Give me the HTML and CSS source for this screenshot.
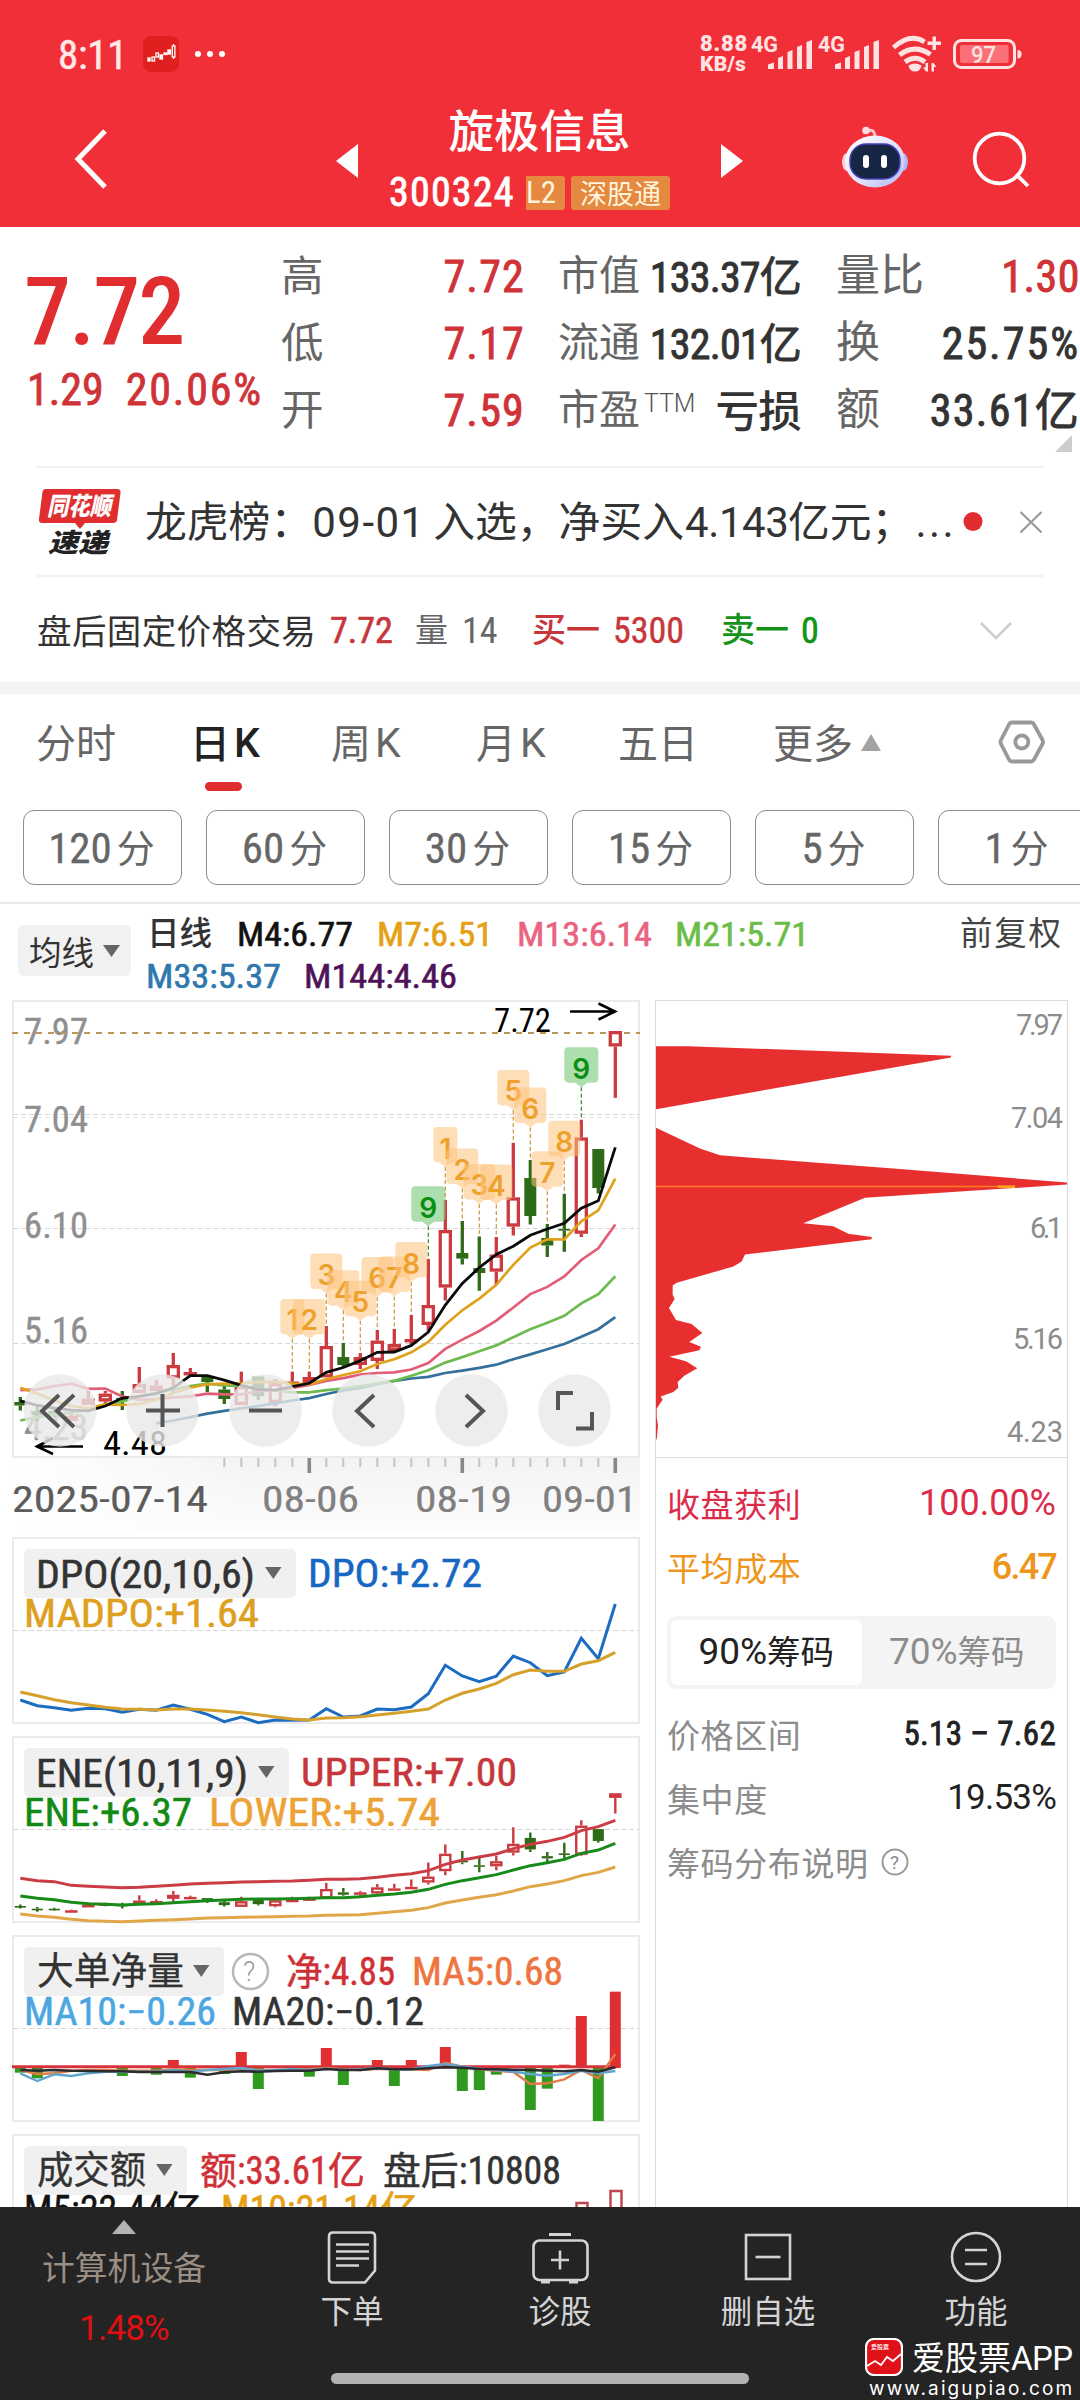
FILE: index.html
```html
<!DOCTYPE html>
<html lang="zh-CN">
<head>
<meta charset="utf-8">
<title>旋极信息 300324</title>
<link rel="stylesheet" href="styles.css">
</head>
<body>
<div class="screen">

<header class="top">
  <div class="status">
    <span class="clock">8:11</span>
    <svg class="app-mini" width="36" height="36" viewBox="0 0 36 36"><rect width="36" height="36" rx="8" fill="#e0201f"/><g stroke="#fff" stroke-width="1.3" fill="none"><rect x="5" y="22" width="2" height="3" fill="#fff"/><rect x="9" y="21" width="2.500" height="4"/><rect x="13" y="17" width="2.500" height="4"/><rect x="17" y="19" width="2.500" height="4" fill="#fff"/><rect x="21" y="17" width="3" height="1.500"/><rect x="25" y="14" width="2.500" height="4" fill="#fff"/><path d="M30.500 8v15"/><rect x="29.300" y="10" width="2.600" height="11" fill="#e0201f"/></g></svg>
    <svg class="dots" width="32" height="8" viewBox="0 0 32 8" fill="#fff"><circle cx="4" cy="4" r="3"/><circle cx="16" cy="4" r="3"/><circle cx="28" cy="4" r="3"/></svg>
    <span class="speed"><b>8.88</b><b>KB/s</b></span>
    <svg class="signals" width="330" height="40" viewBox="750 34 330 40" fill="#ffe3e3">
      <text class="net" x="751" y="52" textLength="27" lengthAdjust="spacingAndGlyphs">4G</text>
      <path d="M768 69v-4.500l6-2v6.500zM778 69v-11l5-2v13zM787.500 69v-17l5-2v19zM797 69v-22l5-2v24zM806.500 69v-27l5.500-2v29z"/>
      <text class="net" x="818" y="52" textLength="27" lengthAdjust="spacingAndGlyphs">4G</text>
      <path d="M835 69v-4.500l6-2v6.500zM845 69v-11l5-2v13zM854.500 69v-17l5-2v19zM864 69v-22l5-2v24zM873.500 69v-27l5.500-2v29z"/>
      <g fill="none" stroke="#ffe3e3" stroke-width="5"><path d="M893.500 47.500q17-15 31-5.500"/><path d="M899.500 55q15-11.500 31-.5"/><path d="M905 62q10-7.500 20 0"/></g>
      <path d="M908.500 65.500q6.500-4 13 0q-1 6-6.500 6t-6.500-6z"/>
      <path d="M932.500 36.500h3.500v5h5v3.500h-5v5h-3.500v-5h-5v-3.500h5zM928 63v8.500h-2l-3-4h2.500V63zM931.500 71.500V63h2l3 4h-2.500v4.500z"/>
      <rect x="954.500" y="40.500" width="60" height="27" rx="7" fill="none" stroke="#ffe3e3" stroke-width="3"/>
      <rect x="960" y="45" width="48.500" height="18" rx="2" fill="#fb7076"/>
      <path d="M1017.500 50q4 0 4 4.200t-4 4.200z"/>
      <text class="batt" x="971" y="62.500" textLength="25" lengthAdjust="spacingAndGlyphs">97</text>
    </svg>
  </div>
  <div class="titlebar">
    <svg width="120" height="136" viewBox="0 91 120 136"><path d="M105 131L78 159l27 28" fill="none" stroke="#fff" stroke-width="5"/></svg>
    <svg class="prev" width="22" height="34" viewBox="0 0 22 34"><path d="M22 0v34L0 17z" fill="#fff"/></svg>
    <div class="stock">
      <div class="stock-name">旋极信息</div>
      <div class="stock-code"><span>300324</span><i class="tag tag-l2">L2</i><i class="tag">深股通</i></div>
    </div>
    <svg class="next" width="22" height="34" viewBox="0 0 22 34"><path d="M0 0v34l22-17z" fill="#fff"/></svg>
    <svg class="robot" width="70" height="64" viewBox="840 125 70 64">
      <defs><linearGradient id="shell" x1="0" y1="0" x2="1" y2="1"><stop offset="0" stop-color="#fff"/><stop offset=".6" stop-color="#dfe0fb"/><stop offset="1" stop-color="#a9b3f3"/></linearGradient></defs>
      <path d="M867 131q7-3 8 5" fill="none" stroke="#ffc4cf" stroke-width="3"/><circle cx="866" cy="130.500" r="3.800" fill="#ffdbe2"/>
      <ellipse cx="847" cy="162" rx="5" ry="9" fill="#ffd0dc"/><ellipse cx="903" cy="162" rx="5" ry="9" fill="#aeb4f5"/>
      <ellipse cx="875" cy="161.500" rx="30" ry="26" fill="url(#shell)"/>
      <rect x="850" y="144" width="50" height="35" rx="16" fill="#162644" stroke="#4b3fb8" stroke-width="1.500"/>
      <rect x="863" y="155" width="6" height="13" rx="3" fill="#fff"/><rect x="881" y="155" width="6" height="13" rx="3" fill="#fff"/>
    </svg>
    <svg class="search" width="60" height="60" viewBox="970 129 60 60" fill="none" stroke="#fff" stroke-width="3.800"><circle cx="999.500" cy="158.500" r="24.800"/><path d="M1016 174l12 12"/></svg>
  </div>
</header>

<section class="quote">
  <div class="price">
    <div class="last">7.72</div>
    <div class="change"><span>1.29</span><span class="pct">20.06%</span></div>
  </div>
  <dl class="facts f1">
    <div><dt>高</dt><dd class="up">7.72</dd></div>
    <div><dt>低</dt><dd class="up">7.17</dd></div>
    <div><dt>开</dt><dd class="up">7.59</dd></div>
  </dl>
  <dl class="facts f2">
    <div><dt>市值</dt><dd>133.37亿</dd></div>
    <div><dt>流通</dt><dd>132.01亿</dd></div>
    <div><dt>市盈<sup>TTM</sup></dt><dd class="cjk">亏损</dd></div>
  </dl>
  <dl class="facts f3">
    <div><dt>量比</dt><dd class="up">1.30</dd></div>
    <div><dt>换</dt><dd class="wide">25.75%</dd></div>
    <div><dt>额</dt><dd>33.61亿</dd></div>
  </dl>
  <svg class="corner" width="17" height="17" viewBox="0 0 17 17"><path d="M17 0v17H0z" fill="#ccc"/></svg>
</section>

<section class="news">
  <svg width="84" height="68" viewBox="36 487 84 68">
    <path d="M45 488h71q4 0 3.500 4l-3.500 27q-.6 3-4 3H84l-5 6-5-6H41q-3.500 0-3-4l3.500-27q.5-3 3.500-3z" fill="#e02e30"/>
    <text class="logo-top" x="46" y="514" textLength="64" lengthAdjust="spacingAndGlyphs">同花顺</text>
    <text class="logo-bottom" x="47" y="551" textLength="60" lengthAdjust="spacingAndGlyphs">速递</text>
  </svg>
  <span class="headline">龙虎榜：<em>09-01</em>入选，净买入<em class="n2">4.143</em>亿元；<em class="n3">...</em></span>
  <svg class="news-end" width="83" height="30" viewBox="960 505 83 30"><circle cx="973" cy="520.500" r="9.500" fill="#e02e30"/><path d="M1020.500 511l21 20.500M1041.500 511l-21 20.500" stroke="#999" stroke-width="2.200"/></svg>
</section>

<section class="after">
  <span class="a1">盘后固定价格交易</span><span class="a2">7.72</span><span class="a3">量</span><span class="a4">14</span><span class="a5">买一</span><span class="a6">5300</span><span class="a7">卖一</span><span class="a8">0</span>
  <svg width="34" height="20" viewBox="0 0 34 20"><path d="M2 2l15 15L32 2" fill="none" stroke="#ccc" stroke-width="2.500"/></svg>
</section>

<nav class="tabs">
  <span>分时</span><span class="on">日<em>K</em></span><span>周<em>K</em></span><span>月<em>K</em></span><span>五日</span><span>更多<svg class="tri" width="20" height="17" viewBox="0 0 20 17"><path d="M10 0l10 17H0z" fill="#a3a3a3"/></svg></span>
  <svg class="hex" width="48" height="46" viewBox="0 0 48 46" fill="none" stroke="#999" stroke-width="3.800" stroke-linejoin="round"><path d="M14 3.500h19q2 0 3 2L44.500 21q1 2 0 4L36 40.500q-1 2-3 2H14q-2 0-3-2L3 25q-1-2 0-4L11 5.500q1-2 3-2z"/><circle cx="23.800" cy="23" r="6.500"/></svg>
</nav>
<div class="periods"><span><em>120</em>分</span><span><em>60</em>分</span><span><em>30</em>分</span><span><em>15</em>分</span><span><em>5</em>分</span><span><em>1</em>分</span></div>

<section class="ma">
  <span class="ma-pick">均线<svg width="17" height="12" viewBox="0 0 17 12"><path d="M0 0h17l-8.500 12z" fill="#666"/></svg></span>
  <svg class="ma-list" width="930" height="85" viewBox="148 910 930 85">
    <text x="147" y="944" class="c" fill="#333" textLength="65">日线</text>
    <text x="237" y="945" class="d" color="#111" textLength="116" lengthAdjust="spacingAndGlyphs">M4:6.77</text>
    <text x="377" y="945" class="d" color="#e5a014" textLength="116" lengthAdjust="spacingAndGlyphs">M7:6.51</text>
    <text x="517" y="945" class="d" color="#ea6480" textLength="135" lengthAdjust="spacingAndGlyphs">M13:6.14</text>
    <text x="675" y="945" class="d" color="#6bbd47" textLength="134" lengthAdjust="spacingAndGlyphs">M21:5.71</text>
    <text x="146" y="987" class="d" color="#2f78ae" textLength="135" lengthAdjust="spacingAndGlyphs">M33:5.37</text>
    <text x="304" y="987" class="d" color="#4e1259" textLength="153" lengthAdjust="spacingAndGlyphs">M144:4.46</text>
    <text x="960" y="944" class="c r" fill="#444" textLength="101">前复权</text>
  </svg>
</section>

<main class="board">
  <div class="left">
    <svg id="kline" class="kline" width="628" height="532" viewBox="12 1000 628 532">
      <defs><linearGradient id="fade" x1="0" y1="0" x2="0" y2="1"><stop offset="0" stop-color="#f3f3f3"/><stop offset="1" stop-color="#fcfcfc"/></linearGradient>
      <linearGradient id="side" x1="0" y1="0" x2="1" y2="0"><stop offset="0" stop-color="#fff"/><stop offset=".4" stop-color="#fff" stop-opacity="0"/></linearGradient></defs>
      <rect x="12" y="1458" width="628" height="74" fill="url(#fade)"/><rect x="12" y="1458" width="628" height="74" fill="url(#side)"/>
      <rect x="13" y="1001" width="626" height="456" fill="#fff" stroke="#ebebeb" stroke-width="2"/>
      <g stroke="#d6d6d6" stroke-dasharray="5 3"><path d="M13 1114.500H639"/><path d="M13 1117.500H639" opacity=".6"/><path d="M13 1228.500H639"/><path d="M13 1343.500H639"/></g>
      <g class="y-axis">
        <text x="24" y="1044" textLength="64">7.97</text><text x="24" y="1132" textLength="64">7.04</text><text x="24" y="1238" textLength="64">6.10</text><text x="24" y="1343" textLength="64">5.16</text><text x="24" y="1440" textLength="64">4.23</text>
      </g>
      <path d="M12 1033H640" stroke="#bd9757" stroke-width="1.800" stroke-dasharray="6 6"/>
      <g id="candles"></g>
      <g id="averages"></g>
      <g id="marks"></g>
      <g class="extreme"><text x="494" y="1032" textLength="57" lengthAdjust="spacingAndGlyphs">7.72</text><text x="103" y="1455" textLength="64" lengthAdjust="spacingAndGlyphs">4.48</text></g>
      <g fill="none" stroke="#000" stroke-width="2.600"><path d="M570 1011.500h44M598.500 1003.500l16.500 8-16.500 8"/><path d="M83 1446.500H39M53 1438l-16 8.500 16 7.500"/></g>
      <g fill="#e9e9e9" fill-opacity=".8"><circle cx="60" cy="1410.500" r="36.300"/><circle cx="162.500" cy="1410.500" r="36.300"/><circle cx="265.500" cy="1410.500" r="36.300"/><circle cx="368.500" cy="1410.500" r="36.300"/><circle cx="471.500" cy="1410.500" r="36.300"/><circle cx="574.500" cy="1410.500" r="36.300"/></g>
      <g fill="none" stroke="#555" stroke-width="4"><path d="M59 1395l-17 16 17 16M74 1395l-17 16 17 16"/><path d="M146 1410.500h34M162.500 1394v33"/><path d="M249 1410.500h33"/><path d="M374 1395l-17 16 17 16"/><path d="M466 1395l17 16-17 16"/><path d="M573 1393h-15v17M576 1428.500h16v-16.500"/></g>
      <g id="ticks"></g>
      <g class="x-axis"><text x="12" y="1512" textLength="196" class="dk" lengthAdjust="spacingAndGlyphs">2025-07-14</text><text x="262" y="1512" textLength="97" lengthAdjust="spacingAndGlyphs">08-06</text><text x="415" y="1512" textLength="97" lengthAdjust="spacingAndGlyphs">08-19</text><text x="542" y="1512" textLength="95" lengthAdjust="spacingAndGlyphs">09-01</text></g>
    </svg>

    <svg class="sub" width="628" height="188" viewBox="12 1537 628 188">
      <rect x="13" y="1538" width="626" height="185" fill="#fff" stroke="#ebebeb" stroke-width="2"/>
      <path d="M13 1630.500H639" stroke="#d6d6d6" stroke-dasharray="5 3"/>
      <rect x="24" y="1549" width="272" height="49" rx="5" fill="#f0f0f0"/><path d="M265 1567h16.500l-8.200 12z" fill="#666"/>
      <g class="lg"><text x="36" y="1588" textLength="219" color="#333" lengthAdjust="spacingAndGlyphs">DPO(20,10,6)</text><text x="308" y="1587" textLength="174" color="#1667c4" lengthAdjust="spacingAndGlyphs">DPO:+2.72</text><text x="24" y="1627" textLength="235" color="#dea01f" lengthAdjust="spacingAndGlyphs">MADPO:+1.64</text></g>
      <g id="dpo"></g>
    </svg>

    <svg class="sub" width="628" height="188" viewBox="12 1736 628 188">
      <rect x="13" y="1737" width="626" height="185" fill="#fff" stroke="#ebebeb" stroke-width="2"/>
      <path d="M13 1829.500H639" stroke="#d6d6d6" stroke-dasharray="5 3"/>
      <rect x="24" y="1748" width="265" height="49" rx="5" fill="#f0f0f0"/><path d="M258 1766h16.500l-8.200 12z" fill="#666"/>
      <g class="lg"><text x="36" y="1787" textLength="212" color="#333" lengthAdjust="spacingAndGlyphs">ENE(10,11,9)</text><text x="301" y="1786" textLength="216" color="#c7363b" lengthAdjust="spacingAndGlyphs">UPPER:+7.00</text><text x="24" y="1826" textLength="168" color="#128a14" lengthAdjust="spacingAndGlyphs">ENE:+6.37</text><text x="209" y="1826" textLength="231" color="#eda236" lengthAdjust="spacingAndGlyphs">LOWER:+5.74</text></g>
      <g id="ene"></g>
    </svg>

    <svg class="sub" width="628" height="188" viewBox="12 1935 628 188">
      <rect x="13" y="1936" width="626" height="185" fill="#fff" stroke="#ebebeb" stroke-width="2"/>
      <path d="M13 2028.500H639" stroke="#d6d6d6" stroke-dasharray="5 3"/>
      <rect x="24" y="1947" width="200" height="49" rx="5" fill="#f0f0f0"/><path d="M193 1965h16.500l-8.200 12z" fill="#666"/>
      <circle cx="250.500" cy="1971.500" r="17.500" fill="none" stroke="#b8b8b8" stroke-width="2.500"/><text x="243" y="1981" class="q">?</text>
      <g class="lg"><text x="37" y="1984" textLength="147" color="#333" class="c" lengthAdjust="spacingAndGlyphs">大单净量</text><text x="286" y="1985" textLength="109" color="#cf3036" lengthAdjust="spacingAndGlyphs">净:4.85</text><text x="412" y="1985" textLength="151" color="#ee7440" lengthAdjust="spacingAndGlyphs">MA5:0.68</text><text x="24" y="2025" textLength="192" color="#4ba6e2" lengthAdjust="spacingAndGlyphs">MA10:−0.26</text><text x="232" y="2025" textLength="192" color="#333" lengthAdjust="spacingAndGlyphs">MA20:−0.12</text></g>
      <g id="net"></g>
    </svg>

    <svg class="sub last-sub" width="628" height="73" viewBox="12 2134 628 73">
      <rect x="13" y="2135" width="626" height="185" fill="#fff" stroke="#ebebeb" stroke-width="2"/>
      <rect x="24" y="2146" width="163" height="49" rx="5" fill="#f0f0f0"/><path d="M156 2164h16.500l-8.200 12z" fill="#666"/>
      <g class="lg"><text x="37" y="2183" textLength="109" color="#333" class="c" lengthAdjust="spacingAndGlyphs">成交额</text><text x="200" y="2184" textLength="165" color="#cf3036" lengthAdjust="spacingAndGlyphs">额:33.61亿</text><text x="383" y="2184" textLength="178" color="#333" lengthAdjust="spacingAndGlyphs">盘后:10808</text><text x="24" y="2223" textLength="178" color="#111" lengthAdjust="spacingAndGlyphs">M5:22.44亿</text><text x="221" y="2223" textLength="197" color="#e5a014" lengthAdjust="spacingAndGlyphs">M10:21.14亿</text></g>
      <g fill="none" stroke="#c2474c" stroke-width="2.500"><path d="M576.500 2210v-7h11v7M610.500 2210v-19h11v19"/></g>
    </svg>
  </div>

  <aside class="chips">
    <svg width="411" height="456" viewBox="656 1001 411 456">
      <g transform="translate(640 990) scale(.3333 .3444)" fill="#e82f30"><path d="M48 163H145L933 191V196L48 346z"/><path d="M48 400L180 460 240 480 780 520 1282 559V565L1075 578 675 603 490 677 580 686 625 708 695 717V724L315 768 305 788 280 803 110 850 98 858V885L104 897 87 923 108 958 155 970 187 996 148 1022 183 1036 178 1046 88 1065 138 1078 172 1098 133 1120 113 1138 115 1155 100 1167 62 1180 68 1190 50 1215V1240L54 1265 50 1305H48z"/></g>
      <path d="M656 1186.500H1015" stroke="#ff7b22" stroke-width="1.500"/><path d="M998 1186.700h17" stroke="#ffa81e" stroke-width="2.500"/>
      <g class="chip-axis"><text x="1016" y="1035" textLength="47">7.97</text><text x="1011" y="1127.500" textLength="52">7.04</text><text x="1030" y="1238" textLength="33">6.1</text><text x="1013" y="1349" textLength="50">5.16</text><text x="1007" y="1441.500" textLength="56">4.23</text></g>
    </svg>
    <div class="stats">
      <div class="row win"><span>收盘获利</span><b>100.00%</b></div>
      <div class="row cost"><span>平均成本</span><b class="m">6.47</b></div>
      <div class="seg"><span class="on"><em>90%</em>筹码</span><span><em>70%</em>筹码</span></div>
      <div class="row"><span>价格区间</span><b class="range">5.13 – 7.62</b></div>
      <div class="row"><span>集中度</span><b class="conc">19.53%</b></div>
      <div class="row help"><span>筹码分布说明</span><svg width="28" height="28" viewBox="0 0 28 28"><circle cx="14" cy="14" r="12.500" fill="none" stroke="#999" stroke-width="2"/><text x="9" y="21" class="q2">?</text></svg></div>
    </div>
  </aside>
</main>

<footer class="bar">
  <div class="sector"><svg width="24" height="14" viewBox="0 0 24 14"><path d="M12 0l12 14H0z" fill="#b3b3b3"/></svg><span>计算机设备</span><b>1.48%</b></div>
  <div class="item"><svg width="60" height="56" viewBox="322 2229 60 56" fill="none" stroke="#d4d4d4" stroke-width="2.600"><path d="M333 2232.500h38q4 0 4 4v34l-10 12h-32q-4 0-4-4v-42q0-4 4-4z"/><path d="M336 2244.500h33M336 2251.500h33M336 2258.500h33M336 2265.500h23"/></svg><span>下单</span></div>
  <div class="item"><svg width="60" height="56" viewBox="530 2229 60 56" fill="none" stroke="#d4d4d4" stroke-width="2.600"><path d="M549 2234.500h22" stroke-width="3"/><rect x="533.500" y="2240.500" width="54" height="39.500" rx="6"/><path d="M551 2260h18M560 2250.500v19"/><path d="M541 2281.500h9M569 2281.500h9" stroke-width="4"/></svg><span>诊股</span></div>
  <div class="item"><svg width="60" height="56" viewBox="738 2229 60 56" fill="none" stroke="#d4d4d4" stroke-width="2.600"><rect x="746" y="2235" width="44" height="44"/><path d="M755.500 2257h25"/></svg><span>删自选</span></div>
  <div class="item"><svg width="60" height="56" viewBox="946 2229 60 56" fill="none" stroke="#d4d4d4" stroke-width="2.600"><circle cx="976" cy="2257" r="24"/><path d="M965 2250h22M965 2264h22"/></svg><span>功能</span></div>
  <i class="home"></i>
  <div class="mark">
    <svg width="38" height="38" viewBox="0 0 38 38"><rect x="1" y="1" width="36" height="36" rx="8" fill="#e01219" stroke="#fff" stroke-width="2.200"/><text x="6" y="10.500" class="tiny">爱股票</text><path d="M2 28l8-5 6 4 6-8 6 4 8-7" fill="none" stroke="#fff" stroke-width="1.800"/></svg>
    <span>爱股票<em>APP</em></span><small>www.aigupiao.com</small>
  </div>
</footer>
</div>
<script src="chart.js"></script>
</body>
</html>
```
FILE: styles.css
```css
*{box-sizing:border-box;margin:0;padding:0}
body{background:#fff;font-family:"Roboto Condensed",Roboto,"Noto Sans CJK SC",sans-serif;color:#333}
em,i{font-style:normal}
svg{display:block;flex:none}
.screen{width:1080px;height:2400px;overflow:hidden;display:flex;flex-direction:column;position:relative}

.top{height:227px;background:#f12f38;color:#fff;flex:none}
.status{height:91px;padding:34px 0 0 58px;display:flex;align-items:flex-start}
.clock{font-size:41px;line-height:42px;width:85px;letter-spacing:-.3px;color:#ffe8e8;-webkit-text-stroke:.5px}
.app-mini{margin-top:2px}
.dots{margin:16px 0 0 15px}
.speed{width:54px;margin-left:474px;display:flex;flex-direction:column;font:700 22px/20px Roboto,sans-serif;color:#ffe3e3;white-space:nowrap}
.speed b{letter-spacing:.8px}
.speed b+b{font-size:21px;letter-spacing:.2px;line-height:20px}
.signals{margin-left:-4px;overflow:visible}
.net{font:700 22px Roboto,sans-serif}
.batt{font:500 23px Roboto,sans-serif;fill:#ffe3e3}
.titlebar{height:136px;display:grid;grid-template-columns:336px 22px 363px 22px 97px 70px 60px 60px}
.titlebar>svg{align-self:start}
.titlebar .prev,.titlebar .next{margin-top:53px}
.stock{padding-top:9px;text-align:center}
.stock-name{font:500 45.500px/56px "Noto Sans CJK SC",sans-serif;height:63px}
.stock-code{display:flex;height:52px;align-items:center;padding-left:31px;font-size:40px}
.stock-code span{width:137px;letter-spacing:1.200px;line-height:46px;text-align:left;font-weight:400;-webkit-text-stroke:.8px;padding-top:7px}
.tag{background:#e4893f;color:#fff3dc;font:400 27px/34px "Noto Sans CJK SC",sans-serif;height:34px;width:99px;border-radius:3px;text-align:center;margin-top:7px}
.tag-l2{width:39px;margin-right:6px;font-family:"Roboto Condensed",sans-serif;font-size:31px;text-align:left;border-radius:0 3px 3px 0}
.robot{grid-column:6;margin-top:34px}
.search{grid-column:8;margin-top:38px}

.quote{height:239px;display:flex;padding-top:15px;position:relative;flex:none}
.price{width:281px;padding-left:24px;color:#e02e30}
.last{font-size:94px;line-height:110px;font-weight:500;margin-top:15px;letter-spacing:-2px}
.change{display:flex;font-size:44px;line-height:50px;color:#cf3338;font-weight:400;-webkit-text-stroke:.8px;padding-left:3px;margin-top:-2px}
.change .pct{letter-spacing:1.800px;margin-left:22px}
.facts div{height:67px;display:flex;justify-content:space-between;align-items:center;line-height:67px}
.facts dt{font:400 42.500px/67px "Noto Sans CJK SC",sans-serif;color:#666;position:relative;top:-3px}
.facts dd{font-size:44px;font-weight:400;-webkit-text-stroke:.9px;white-space:nowrap;padding-top:4px}
.facts .up{color:#cf3338}
.f1{width:244px;margin-right:33px}
.f1 dd{letter-spacing:1.200px}
.f2{width:243px;margin-right:35px}
.f2 dt{font-size:41px}
.f2 dd{font-size:42px;letter-spacing:-.8px}
.f2 dd.cjk{font:500 43.500px/67px "Noto Sans CJK SC",sans-serif;-webkit-text-stroke:0;padding-top:0;position:relative;top:-1px}
.f3{width:244px}
.f3 dt{font-size:44px}
.f3 dd{letter-spacing:1.300px}
.f3 dd.up{letter-spacing:.5px}
.f3 dd.wide{letter-spacing:2px}
.facts sup{font:300 25px/20px Roboto,sans-serif;vertical-align:12px;margin-left:4px;letter-spacing:-.2px;color:#555}
.corner{position:absolute;right:8px;bottom:14px}

.news{height:111px;margin:0 37px;border-top:2px solid #f0f0f0;border-bottom:2px solid #f0f0f0;display:flex;align-items:center;flex:none}
.logo-top{font:900 italic 25px "Noto Sans CJK SC",sans-serif;fill:#fff}
.logo-bottom{font:900 italic 26px "Noto Sans CJK SC",sans-serif;fill:#222}
.headline{flex:none;font:400 41.800px/60px "Noto Sans CJK SC",sans-serif;margin:-2px 0 0 24px;width:822px;white-space:nowrap}
.headline em{font-family:Roboto,sans-serif;font-size:42px;display:inline-block;width:121px;padding-left:0;letter-spacing:1.500px}
.headline .n2{width:104px;padding-left:1px;letter-spacing:-.4px}
.headline .n3{width:auto;letter-spacing:2.500px;padding-left:2px}
.news-end{margin-left:-7px;margin-top:-2px}

.after{height:105px;display:flex;align-items:center;padding-left:37px;font-size:36px;flex:none;position:relative;padding-top:2px}
.after span{line-height:60px;white-space:nowrap}
.after .a1{width:293px;font:400 34.500px/60px "Noto Sans CJK SC",sans-serif;letter-spacing:.4px;margin-top:-4px}
.a2{width:85px;color:#c7363b;-webkit-text-stroke:.6px}
.a3{width:47px;color:#666}
.after .a3{font-size:33px}
.a4{width:70px;color:#666}
.a5{width:81px;color:#c7363b}
.a6{width:108px;color:#c7363b;-webkit-text-stroke:.4px}
.a7{width:80px;color:#149318}
.a8{color:#149318;-webkit-text-stroke:.6px}
.after .a5,.after .a7{font-size:34px;font-weight:500;margin-top:-1px}
.after svg{position:absolute;left:979px;top:44px}

.tabs{height:114px;border-top:12px solid #f4f4f4;display:grid;grid-template-columns:154px 141px 145px 142px 155px 263px 44px;padding-left:36px;font:400 40px/94px "Noto Sans CJK SC",sans-serif;color:#666;flex:none}
.tabs span{white-space:nowrap;display:flex}
.tabs em{font:400 41px/98px Roboto,sans-serif;margin-left:4px}
.tabs .on{color:#222;font-weight:500;position:relative}
.tabs .on em{font-weight:500}
.tabs .on::after{content:"";position:absolute;left:15px;top:88px;width:37px;height:9px;border-radius:5px;background:#e02e30}
.tri{margin:40px 0 0 8px}
.hex{margin:25px 0 0 -38px}
.periods{height:75px;margin:14px 0 17px 23px;display:flex;gap:24px;flex:none;width:1080px}
.periods span{flex:none;width:159px;border:1.500px solid #8c8c8c;border-radius:11px;display:flex;justify-content:center;gap:5px;font:400 38px/69px "Noto Sans CJK SC",sans-serif;color:#666;padding-right:2px}
.periods em{font:400 43px/74px "Roboto Condensed",sans-serif;-webkit-text-stroke:.3px}

.ma{height:98px;border-top:2px solid #e9e9e9;display:flex;padding:7px 0 0 18px;flex:none}
.ma-pick{flex:none;width:113px;height:51px;border-radius:6px;background:#f1f1f1;margin:14px 17px 0 0;display:flex;align-items:center;gap:9px;padding-left:11px;font:400 32.500px/48px "Noto Sans CJK SC",sans-serif}
.ma-list .c{font:500 32.500px "Noto Sans CJK SC",sans-serif}
.ma-list .c.r{font-weight:400}
.ma-list{overflow:visible}
.d{font:400 34px "Roboto Condensed",sans-serif;fill:currentColor;stroke:currentColor;stroke-width:.6px}

.board{flex:1;display:flex;padding-left:12px;min-height:0}
.left{width:628px;display:flex;flex-direction:column}
.sub{margin:5px 0 6px}
.y-axis{font:400 36.500px "Roboto Condensed",sans-serif;fill:#8f8f8f;stroke:#8f8f8f;stroke-width:.4px}
.x-axis{font:400 37px "Roboto Condensed",sans-serif;fill:#808080;stroke:#808080;stroke-width:.2px}
.x-axis .dk{fill:#5c5c5c;stroke:#5c5c5c}
.extreme{font:400 33px "Roboto Condensed",sans-serif;fill:#000}
.lg{font:400 38px "Roboto Condensed","Noto Sans CJK SC",sans-serif}
.lg text{fill:currentColor;stroke:currentColor;stroke-width:.5px}
.lg .c{font-family:"Noto Sans CJK SC",sans-serif;stroke-width:.3px}
.q{font:300 27px Roboto,sans-serif;fill:#999}
.q2{font:400 19px Roboto,sans-serif;fill:#888}
.badge{font:600 28px Inter,sans-serif;text-anchor:middle}

.chips{width:413px;margin-left:15px;border:1px solid #dcdcdc;border-bottom:0}
.chip-axis{font:400 29px Roboto,sans-serif;fill:#8c8c8c}
.stats{border-top:1px solid #dcdcdc;padding:13px 11px 0 11px}
.row{height:64px;display:flex;justify-content:space-between;font:400 33px/64px "Noto Sans CJK SC",sans-serif;color:#8c8c8c;letter-spacing:.6px}
.row b{font:400 36px/65px Roboto,sans-serif;color:#222;letter-spacing:0}
.row.win,.row.win b{color:#dc2b49}
.row.cost,.row.cost b{color:#ee951c}
.row b.m{font-weight:500;letter-spacing:-1.800px}
.row b.conc{font-size:35px;line-height:64px;letter-spacing:-.8px}
.row .range{font:400 33px/64px "Roboto Condensed",sans-serif;letter-spacing:.3px;-webkit-text-stroke:.8px}
.seg{height:73px;background:#f4f4f4;border-radius:9px;margin:17px 0 13px 0;padding:4px;display:flex}
.seg span{flex:1;text-align:center;font:400 33.500px/60px "Noto Sans CJK SC",sans-serif;color:#8c8c8c}
.seg em{font:400 37px/64px Roboto,sans-serif}
.seg .on{background:#fff;border-radius:6px;color:#222}
.row.help{justify-content:flex-start;gap:12px}
.help svg{margin-top:18px}

.bar{height:193px;background:#242424;flex:none;display:grid;grid-template-columns:248px repeat(4,208px);position:relative}
.sector{display:flex;flex-direction:column;align-items:center}
.sector svg{margin-top:13px}
.sector span{font:400 32.800px/60px "Noto Sans CJK SC",sans-serif;color:#9b8e83;margin-top:2px}
.sector b{font:400 35px/44px Roboto,sans-serif;color:#e01010;margin-top:11px;letter-spacing:-.8px}
.item{display:flex;flex-direction:column;align-items:center}
.item svg{margin-top:22px}
.item span{font:400 31.500px/44px "Noto Sans CJK SC",sans-serif;color:#d4d4d4;margin-top:2px}
.home{position:absolute;left:331px;top:166px;width:418px;height:11px;border-radius:6px;background:#b2b2b2}
.mark{position:absolute;left:865px;top:131px;width:212px;color:#fff;display:flex;flex-wrap:wrap}
.mark span{font:400 33px/36px "Noto Sans CJK SC",sans-serif;margin-left:9px;white-space:nowrap}
.mark em{font:400 33px/38px Roboto,sans-serif;letter-spacing:-.6px}
.mark small{font:400 19px/22px Inter,sans-serif;letter-spacing:2.100px;margin-left:4px;white-space:nowrap}
.tiny{font:500 6px "Noto Sans CJK SC",sans-serif;fill:#fff}
```
FILE: chart.js
```js
// Daily candles: [high, bodyTop, bodyBottom, low, isUp], in chart units.
const candles = [
[1397,1402,1405.5,1410.5,0],[1405,1411,1415,1421,0],[1408,1411,1414,1417,0],[1414,1416,1421,1421,1],
[1390.5,1398.5,1405,1405,1],[1391,1393.6,1401.5,1403,1],[1391,1397.8,1400,1410,0],[1367,1384,1393,1393,1],
[1380,1385.5,1391,1391,1],[1353,1365,1378.5,1394,1],[1368,1372,1375,1375,1],[1376,1376,1382,1392,0],
[1385,1389.5,1399,1404,0],[1371.6,1386,1405,1405,1],[1376,1376.5,1396,1400,0],[1379,1383,1403,1406,1],
[1371.6,1381.5,1384,1384,1],[1371.6,1377,1383.5,1383.5,1],[1326,1346,1377.5,1377.5,1],[1343,1357,1365,1368,0],
[1353,1357,1365,1369,1],[1330,1340.6,1361,1369,1],[1329,1344,1351,1351,1],[1315,1339,1341,1344,1],
[1259,1305,1325,1331,1],[1200,1230,1287.6,1300.6,1],[1221,1253,1258.6,1264.5,0],[1236.6,1268,1273,1290.7,0],
[1237,1254.5,1271.7,1284.5,1],[1143,1197.3,1226.6,1235.5,1],[1160,1178,1216,1224.5,0],[1224,1238,1245.5,1257,0],
[1194,1229,1230.5,1251.7,0],[1119.8,1137.4,1233.8,1237,1],[1149,1149,1188,1193.5,0],[1031,1031,1046.5,1097.8,1]];
const X = i => 20.3 + 17 * i;
const put = (id, s) => { document.getElementById(id).innerHTML += s; };
const line = (v, y, color, w, from = 0) =>
  `<polyline fill="none" stroke="${color}" stroke-width="${w}" points="${v.map((n, i) => X(i + from).toFixed(1) + ',' + y(n).toFixed(1)).join(' ')}"/>`;

function drawCandles(y, width, stroke) {
  return candles.map((c, i) => {
    const x = X(i), [h, t, b, l] = c.slice(0, 4).map(y), red = c[4], col = red ? '#cb3a3f' : '#2e6a17';
    const wick = `<path d="M${x} ${h}V${t}M${x} ${b}V${l}" stroke="${col}" stroke-width="${stroke}"/>`;
    if (!red) return wick + `<rect x="${x - width / 2 + .7}" y="${t}" width="${width - 1.4}" height="${Math.max(1.6, b - t)}" fill="${col}"/>`;
    const hh = Math.max(.1, b - t - stroke);
    return wick + `<rect x="${x - width / 2 + stroke / 2}" y="${t + stroke / 2}" width="${width - stroke}" height="${hh}" fill="#fff" stroke="${col}" stroke-width="${stroke}"/>`;
  }).join('');
}
put('candles', drawCandles(v => v, 13.4, 3.3));

const P = v => 990 + v * .3444;
put('averages',
  line([1258,1250,1240,1230,1222,1215,1208,1200,1192,1185,1173,1163,1155,1145,1135,1128,1123,1112,1105,1097,1088,1072,1058,1043,1028,1007,985,950], P, '#34709b', 2.7, 8) +
  line([1250,1240,1232,1228,1218,1203,1195,1180,1170,1160,1150,1143,1148,1150,1158,1163,1168,1168,1162,1157,1150,1143,1135,1120,1104,1082,1066,1049,1032,1008,985,966,946,910,883,831], P, '#6fba50', 2.7) +
  line([1162,1160,1150,1143,1158,1157,1180,1190,1188,1183,1180,1172,1174,1174,1165,1162,1155,1147,1135,1127,1117,1112,1110,1102,1083,1042,1015,990,960,922,883,862,832,784,750,681], P, '#e25d77', 2.7) +
  line([1155,1172,1192,1208,1215,1203,1205,1202,1190,1170,1155,1145,1143,1142,1138,1138,1143,1145,1130,1118,1107,1086,1072,1052,1022,972,930,896,856,798,748,724,724,672,640,548], P, '#e0a11c', 2.7) +
  line([1193,1206,1214,1220,1222,1208,1185,1180,1172,1155,1120,1120,1133,1148,1160,1162,1152,1142,1110,1096,1076,1052,1051,1032,993,915,852,806,768,744,712,694,677,634,612,457], P, '#0a0a0a', 2.8));

// Sequence counters above the candles: [index, digit, badge top].
const marks = [[16,1,897],[17,2,897],[18,3,765],[19,4,814],[20,5,844],[21,6,775],[22,7,774],[23,8,732],[24,9,570],[25,1,398],[26,2,460],[27,3,505],[28,4,507],[29,5,232],[30,6,283],[31,7,468],[32,8,380],[33,9,166]];
marks.forEach(([i, n, top]) => {
  const x = X(i), y = P(top), nine = n === 9, w = n === 1 ? 12 : nine ? 17 : 16, c = nine ? '#2f8a2f' : '#c9973a';
  put('marks', `<path d="M${x} ${y + 40}V${candles[i][0]}" stroke="${c}" stroke-width="1.2" stroke-dasharray="4 2.500"/>
  <path d="M${x - w + 4} ${y}h${2 * w - 8}q4 0 4 4v27q0 4-4 4.500h${-(w - 10)}l-6 4.500-6-4.500h${-(w - 10)}q-4-.5-4-4.500v-27q0-4 4-4z" fill="${nine ? '#86cf88' : '#fdc27c'}" fill-opacity="${nine ? .68 : .55}"/>
  <text class="badge" x="${x}" y="${y + 31.500}" fill="${nine ? '#0b8f12' : '#eda12c'}">${n}</text>`);
});

for (let i = 12; i < 36; i++) {
  const major = i === 17 || i === 26 || i === 35;
  put('ticks', `<path d="M${X(i)} 1458v${major ? 15 : 9}" stroke="${major ? '#888' : '#c4c4c4'}" stroke-width="${major ? 3.6 : 2}"/>`);
}

const A = v => 1530 + v / 3;
put('dpo',
  line([510,527,533,541,535,536,547,538,541,525,538,553,575,561,578,570,571,570,536,561,558,537,539,531,491,406,438,455,439,378,398,437,426,325,386,222], A, '#1c6cc2', 3) +
  line([486,497,509,518,525,532,537,538,540,537,537,540,544,548,554,561,567,570,564,563,560,555,550,544,537,510,490,477,460,434,420,424,424,402,392,367], A, '#d6a02c', 3));

put('ene', drawCandles(v => 1793.3 + (v - 1031.3) * .304, 12.5, 2.4) +
  line([1045,1052,1055,1066,1069,1071,1073,1072,1069,1066,1062,1060,1058,1056,1055,1054,1053,1051,1048,1048,1046,1042,1036,1031,1022,1003,990,981,972,956,943,934,922,902,890,871], A, '#cb3d44', 2.9) +
  line([1098,1105,1109,1117,1121,1123,1125,1123,1121,1118,1115,1112,1110,1108,1107,1107,1106,1105,1103,1103,1100,1096,1092,1087,1078,1063,1052,1043,1034,1020,1007,998,988,970,960,940], A, '#178a1a', 2.9) +
  line([1152,1158,1162,1168,1172,1174,1175,1173,1171,1169,1167,1164,1163,1162,1161,1160,1159,1158,1156,1155,1154,1150,1145,1141,1133,1119,1110,1102,1094,1083,1070,1062,1052,1037,1027,1011], A, '#e0a648', 2.9));

const N = v => 1920 + v / 3;
const flows = {0:458,1:475,6:468,8:464,9:420,10:473,12:462,13:396,14:507,17:470,18:384,19:495,21:420,22:498,23:420,25:381,26:513,27:510,28:464,30:570,31:506,32:434,33:288,34:603,35:215};
put('net', Object.entries(flows).map(([i, v]) => {
  const up = v < 444, a = N(v), z = 2068;
  return `<rect x="${X(+i) - 5.5}" y="${Math.min(a, z)}" width="11" height="${Math.abs(a - z)}" fill="${up ? '#e02f31' : '#309a20'}"/>`;
}).join('') + '<path d="M12 2066.800H617" stroke="#d8323a" stroke-width="3"/>' +
  line([450,462,460,452,450,450,452,452,452,448,450,450,450,447,450,450,449,448,444,448,450,446,448,448,450,428,440,448,452,456,492,490,478,450,475,402], N, '#e07a42', 2.4) +
  line([460,483,463,468,460,455,455,455,455,450,455,450,447,444,452,450,448,450,446,450,448,444,448,448,438,432,440,446,450,455,462,467,462,452,460,453], N, '#62a5cf', 2.4) +
  line([450,452,450,452,453,454,454,456,456,456,456,464,457,454,455,453,452,452,447,450,450,445,448,448,445,442,443,447,448,449,450,452,454,450,455,442], N, '#2c2c30', 2.6));
```
